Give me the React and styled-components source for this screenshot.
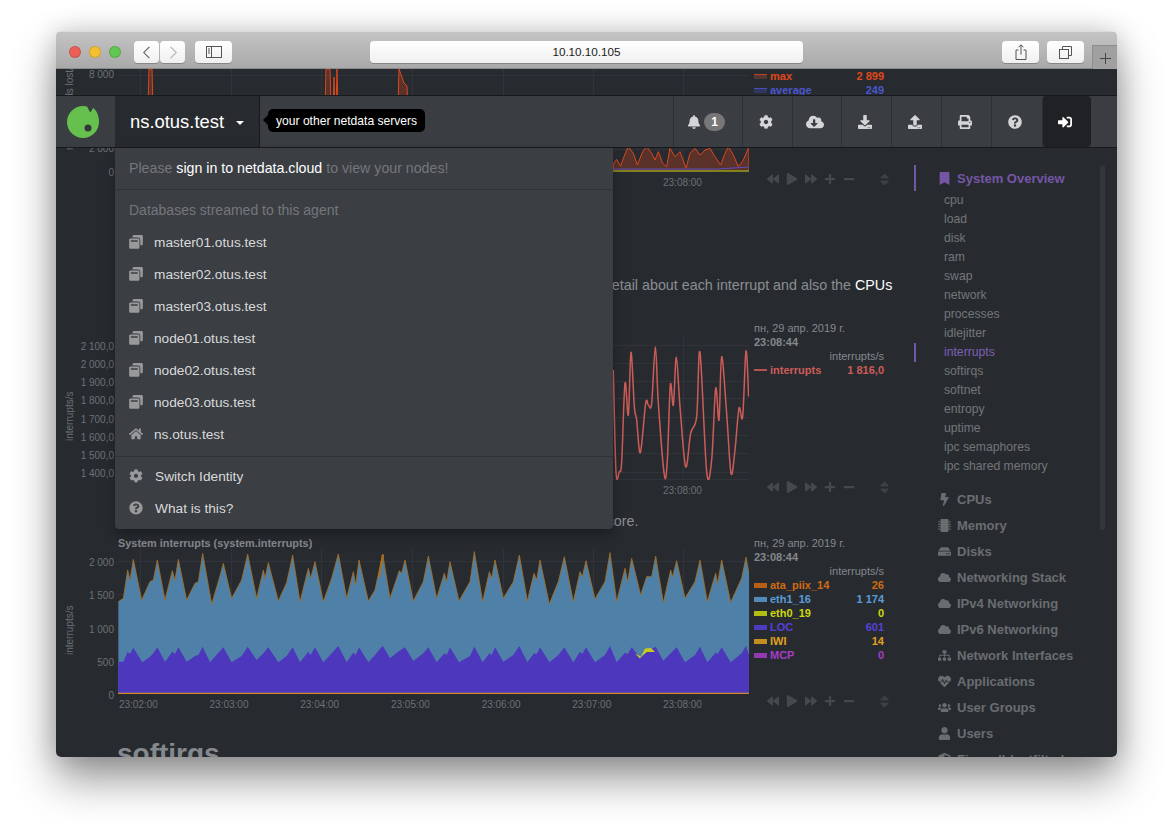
import React from 'react';
import styled, { createGlobalStyle } from 'styled-components';
import {
  FaBell, FaCog, FaCloudDownloadAlt, FaDownload, FaUpload, FaPrint, FaQuestionCircle, FaSignInAlt,
  FaWindowRestore, FaHome, FaBookmark, FaBolt, FaMicrochip, FaHdd, FaCloud, FaSitemap, FaHeartbeat, FaUsers,
  FaUser, FaShieldAlt, FaBackward, FaPlay, FaForward, FaPlus, FaMinus, FaSort,
} from 'react-icons/fa';

const GlobalStyle = createGlobalStyle`
  html, body { margin: 0; padding: 0; background: #fff; }
  body { font-family: 'Liberation Sans', Arial, sans-serif; }
  * { box-sizing: border-box; }
`;

const Desktop = styled.div`
  width: 1173px;
  height: 837px;
  padding: 31px 56px;
  overflow: hidden;
`;

const Window = styled.div`
  width: 1061px;
  height: 726px;
  display: flex;
  flex-direction: column;
  border-radius: 5px;
  overflow: hidden;
  box-shadow: 0 22px 44px rgba(0, 0, 0, 0.42), 0 0 26px rgba(0, 0, 0, 0.16);
`;

/* browser chrome */
const TitleBar = styled.div`
  height: 38px;
  flex: none;
  display: flex;
  align-items: flex-start;
  padding-top: 9px;
  background: linear-gradient(#c4c4c4, #a9a9a9);
  border-top: 1px solid #dcdcdc;
  border-bottom: 1px solid #8a8a8a;
`;

const Light = styled.span`
  width: 12px;
  height: 12px;
  margin: 5px 8px 0 0;
  border-radius: 50%;
  background: ${(p) => p.$color};
  border: 1px solid rgba(0, 0, 0, 0.14);
  &:first-child { margin-left: 13px; }
`;

const ChromeButton = styled.div`
  width: ${(p) => p.$w}px;
  height: 22px;
  margin-left: ${(p) => p.$ml}px;
  display: flex;
  align-items: center;
  justify-content: center;
  background: linear-gradient(#fff, #f0f0f0);
  border-radius: 4px;
  box-shadow: 0 1px 0 rgba(0, 0, 0, 0.22);
  color: ${(p) => p.$color || '#555'};
`;

const UrlField = styled(ChromeButton)`
  font-size: 11.7px;
  padding-bottom: 2px;
  color: #222;
`;

const NewTab = styled.div`
  width: 25px;
  height: 25px;
  margin: 4px 0 0 8px;
  display: flex;
  align-items: center;
  justify-content: center;
  background: #a0a0a0;
  border: 1px solid #8d8d8d;
  border-width: 1px 0 0 1px;
  color: #444;
`;

/* page under the navbar */
const Viewport = styled.div`
  position: relative;
  flex: 1;
  min-height: 0;
  overflow: hidden;
  background: #272b30;
`;

const Dashboard = styled.div`
  display: flex;
  align-items: flex-start;
`;

const Charts = styled.div`
  width: 858px;
  flex: none;
`;

const ChartRow = styled.div`
  display: grid;
  grid-template-columns: 62px 631px 165px;
  height: ${(p) => p.$h}px;
`;

const YAxis = styled.div`
  display: flex;
  justify-content: space-between;
  align-items: flex-start;
  padding-left: 8px;
`;

const YLabel = styled.div`
  writing-mode: vertical-rl;
  transform: rotate(180deg);
  font-size: 10px;
  line-height: 12px;
  color: #6d7074;
  white-space: nowrap;
  height: ${(p) => p.$h}px;
  text-align: center;
  width: 12px;
`;

const Ticks = styled.div`
  height: ${(p) => p.$h}px;
  padding: ${(p) => p.$top}px 4px 0 0;
  display: flex;
  flex-direction: column;
  justify-content: space-between;
  align-items: flex-end;
  font-size: 10px;
  line-height: 12px;
  color: #6d7074;
  white-space: nowrap;
`;

const PlotArea = styled.div`
  position: relative;
  svg { display: block; }
`;

const ChartTitle = styled.div`
  position: absolute;
  left: 0;
  top: -12px;
  font-size: 10.9px;
  font-weight: 700;
  line-height: 13px;
  color: #85888c;
`;

const XAxis = styled.div`
  display: flex;
  margin-left: -25px;
  height: 20px;
  align-items: center;
  overflow: hidden;
`;

const XLabel = styled.span`
  width: 90.7px;
  flex: none;
  text-align: center;
  font-size: 10px;
  color: #6d7074;
`;

const Legend = styled.div`
  height: calc(100% + ${(p) => p.$up}px);
  margin-top: -${(p) => p.$up}px;
  padding: 0 27px 5px 5px;
  display: flex;
  flex-direction: column;
  font-size: 11px;
  line-height: 14px;
  color: #85888c;
`;

const LegendTime = styled.div`
  font-weight: 700;
`;

const LegendUnit = styled.div`
  text-align: right;
  padding-right: 3px;
`;

const LegendRow = styled.div`
  display: flex;
  align-items: center;
  padding-right: 3px;
  font-weight: 700;
  color: ${(p) => p.$color};
`;

const Swatch = styled.i`
  width: 13px;
  height: ${(p) => p.$h}px;
  margin-right: 3px;
  background: ${(p) => p.$color};
  border-top: ${(p) => (p.$edge ? `1px solid ${p.$edge}` : '0')};
  opacity: 0.85;
`;

const LegendValue = styled.span`
  margin-left: auto;
`;

const Controls = styled.div`
  margin-top: auto;
  height: 16px;
  padding-left: 13px;
  display: flex;
  align-items: center;
  gap: 7px;
  color: #45484d;
  font-size: 12px;
`;

const SortIcon = styled(FaSort)`
  margin: 0 -5px 0 auto;
  font-size: 15px;
  color: #3d4045;
`;

const Paragraph = styled.p`
  margin: ${(p) => p.$mt}px 0 0;
  padding-left: 62px;
  width: 850px;
  font-size: 14.3px;
  line-height: 20px;
  height: ${(p) => p.$h}px;
  color: #8b8e92;
`;

const Code = styled.code`
  font-family: 'Liberation Mono', monospace;
  font-size: 12px;
  padding: 2px 4.5px;
`;

const Link = styled.span`
  color: #fff;
`;

const SectionHeading = styled.h2`
  margin: 23px 0 0 61px;
  font-size: 28px;
  line-height: 34px;
  font-weight: 700;
  color: #85888c;
`;

/* right hand table of contents */
const Sidebar = styled.nav`
  flex: 1;
  padding-top: 96px;
  font-size: 13px;
`;

const SideHeader = styled.div`
  height: 26px;
  display: flex;
  align-items: center;
  padding-left: 22px;
  border-left: 2px solid ${(p) => (p.$active ? '#7556a5' : 'transparent')};
  font-weight: 700;
  white-space: nowrap;
  color: ${(p) => (p.$active ? '#7556a5' : '#6a6d70')};
  svg { width: 13px; margin-right: 6px; font-size: 13px; flex: none; }
`;

const SideList = styled.div`
  margin-bottom: 10px;
`;

const SideItem = styled.div`
  height: 19px;
  line-height: 18px;
  padding-left: 28px;
  font-size: 12.2px;
  border-left: 2px solid ${(p) => (p.$active ? '#7556a5' : 'transparent')};
  color: ${(p) => (p.$active ? '#7f5fb4' : '#737679')};
`;

const Scrollbar = styled.div`
  position: absolute;
  left: 1044px;
  top: 96px;
  width: 5px;
  height: 365px;
  border-radius: 3px;
  background: #33363b;
`;

/* sticky navbar, lies over the page */
const NavBar = styled.div`
  position: absolute;
  top: 26px;
  left: 0;
  right: 0;
  height: 53px;
  display: flex;
  background: #3a3d42;
  border-top: 1px solid #17191c;
  border-bottom: 1px solid #17191c;
`;

const LogoCell = styled.div`
  width: 59px;
  flex: none;
  display: flex;
  align-items: center;
  padding-left: 11px;
`;

const HostCell = styled.div`
  width: 145px;
  flex: none;
  display: flex;
  align-items: center;
  padding-left: 15px;
  background: #272b30;
  border-right: 1px solid #17191c;
  color: #fff;
  font-size: 18.4px;
`;

const Caret = styled.i`
  width: 0;
  height: 0;
  margin: 2px 0 0 12px;
  border: 4px solid transparent;
  border-top-color: #fff;
  border-bottom: 0;
`;

const Tooltip = styled.div`
  position: absolute;
  left: 212px;
  top: 13px;
  height: 23px;
  padding: 0 8px;
  display: flex;
  align-items: center;
  border-radius: 5px;
  background: #000;
  color: #fff;
  font-size: 12.1px;
  white-space: nowrap;
  &::before {
    content: '';
    position: absolute;
    left: -5px;
    top: 6px;
    border: 5px solid transparent;
    border-right-color: #000;
    border-left: 0;
  }
`;

const NavActions = styled.div`
  margin-left: auto;
  margin-right: 26px;
  display: flex;
`;

const NavItem = styled.div`
  width: ${(p) => p.$w}px;
  display: flex;
  align-items: center;
  justify-content: center;
  gap: 3px;
  padding-right: 4px;
  border-left: 1px solid #2c2f33;
  color: ${(p) => (p.$dark ? '#fff' : '#d4d5d6')};
  background: ${(p) => (p.$dark ? '#1f2125' : 'transparent')};
  border-radius: ${(p) => (p.$dark ? '4px' : '0')};
  font-size: 14px;
`;

const Badge = styled.span`
  width: 21px;
  height: 18px;
  border-radius: 9px;
  background: #777;
  color: #fff;
  font-size: 12px;
  font-weight: 700;
  text-align: center;
  line-height: 18px;
`;

const Dropdown = styled.div`
  position: absolute;
  left: 59px;
  top: 79px;
  width: 498px;
  height: 381px;
  padding-top: 9px;
  background: #3b3e43;
  border-radius: 0 0 4px 4px;
  box-shadow: 0 6px 12px rgba(0, 0, 0, 0.3);
  font-size: 13.7px;
  color: #d9dadb;
`;

const MenuNote = styled.div`
  height: 32px;
  line-height: 22px;
  padding-left: 14px;
  font-size: 14.2px;
  color: #74777b;
`;

const MenuSignIn = styled.span`
  color: #fff;
`;

const MenuDivider = styled.div`
  height: 1px;
  margin: ${(p) => p.$mt}px 0 ${(p) => p.$mb}px;
  background: #303337;
`;

const MenuHeader = styled.div`
  height: 27px;
  line-height: 22px;
  padding-left: 14px;
  font-size: 14px;
  color: #74777b;
`;

const MenuItem = styled.div`
  height: 32px;
  display: flex;
  align-items: center;
  padding-left: 14px;
`;

const MenuIconBox = styled.span`
  width: ${(p) => p.$w}px;
  flex: none;
  display: flex;
  color: #98999b;
  svg { width: 14px; }
`;

/* chart data, measured off the picture */
const path = (pts) => 'M' + pts.map(([x, y]) => `${x} ${y}`).join('L');

const smooth = (pts) => {
  let d = `M${pts[0][0]} ${pts[0][1]}`;
  for (let i = 0; i < pts.length - 1; i++) {
    const p0 = pts[i - 1] || pts[i];
    const p1 = pts[i];
    const p2 = pts[i + 1];
    const p3 = pts[i + 2] || p2;
    const c1 = [p1[0] + (p2[0] - p0[0]) / 6, p1[1] + (p2[1] - p0[1]) / 6];
    const c2 = [p2[0] - (p3[0] - p1[0]) / 6, p2[1] - (p3[1] - p1[1]) / 6];
    d += `C${c1[0]} ${c1[1]} ${c2[0]} ${c2[1]} ${p2[0]} ${p2[1]}`;
  }
  return d;
};

const left = (z) => z.map(([x, y]) => [x / 3 - 58, y / 3 - 19]);
const right = (z) => z.map(([x, y]) => [x / 3 + 332, y / 3 - 19]);

const topSeries = [
  ...left([[175,215],[190,205],[203,120],[210,150],[220,88],[245,210],[270,155],[280,150],[292,90],[315,210],[337,122],[345,150],[355,88],[380,210],[405,160],[415,155],[428,70],[455,222],[478,145],[490,100],[515,205],[545,150],[563,72],[590,205],[610,120],[615,145],[625,98],[655,213],[680,158],[698,75],[720,215],[745,115],[752,145],[765,95],[790,215],[815,145],[835,72],[860,205],[880,125],[887,165],[897,90],[925,213],[945,180],[968,72],[990,205],[1018,122],[1025,130],[1035,90],[1060,213],[1090,155],[1105,78],[1130,205],[1153,130],[1160,155]]),
  ...right([[0,95],[27,213],[60,155],[73,65],[98,215],[118,125],[125,145],[135,90],[160,205],[190,155],[208,75],[232,213],[252,130],[260,150],[270,90],[298,222],[325,155],[343,80],[370,215],[390,125],[397,140],[408,92],[435,207],[465,155],[480,68],[500,215],[525,115],[533,155],[545,85],[572,195],[590,140],[605,140],[617,78],[640,218],[662,120],[668,140],[680,92],[705,205],[735,155],[750,90],[772,215],[797,130],[803,160],[815,90],[842,217],[875,145],[888,82],[897,130]]),
];

const locSeries = [
  ...left([[175,395],[190,395],[203,365],[210,372],[220,353],[247,397],[270,380],[280,370],[292,352],[315,395],[337,365],[345,372],[355,352],[380,395],[405,378],[415,375],[428,350],[450,397],[478,365],[490,352],[515,397],[545,378],[563,350],[590,390],[610,370],[625,352],[655,397],[680,378],[698,352],[720,397],[745,365],[752,375],[765,352],[790,397],[815,370],[835,348],[860,397],[880,368],[887,375],[897,352],[925,397],[945,375],[968,347],[990,385],[1018,362],[1035,352],[1060,393],[1090,370],[1105,352],[1130,397],[1153,370],[1160,375]]),
  ...right([[0,352],[27,397],[60,378],[73,350],[98,397],[118,370],[125,375],[135,352],[160,395],[190,375],[208,348],[232,397],[252,370],[260,372],[270,352],[298,397],[325,375],[343,352],[370,397],[390,365],[397,372],[408,352],[435,397],[465,375],[480,348],[500,397],[525,368],[533,372],[545,352],[572,385],[590,365],[617,350],[640,392],[662,370],[680,352],[705,397],[735,375],[750,350],[772,397],[797,368],[803,372],[815,352],[842,397],[875,370],[888,347],[897,375]]),
];

const closeTo = (pts, y) => `${path(pts)}L${pts[pts.length - 1][0]} ${y}L${pts[0][0]} ${y}Z`;

const lineSeries = [[40,660],[48,965],[58,965],[65,935],[75,700],[85,795],[93,607],[103,770],[110,810],[121,908],[137,760],[145,765],[155,760],[166,590],[175,760],[193,975],[202,930],[211,705],[220,765],[229,622],[240,770],[257,950],[272,850],[290,800],[300,607],[320,965],[335,930],[347,715],[357,810],[365,620],[380,790],[393,970],[405,900],[417,775],[428,800],[438,603],[446,740]]
  .map(([x, y]) => [482 + x / 3, y / 3 - 185]);

const maxSeries = [[40,42],[50,28],[62,48],[72,20],[85,-10],[100,10],[112,45],[128,5],[140,-10],[155,10],[165,30],[175,5],[188,40],[200,50],[210,-5],[225,20],[240,5],[258,55],[270,10],[285,-5],[300,15],[315,0],[330,-5],[345,20],[362,45],[375,10],[385,-10],[400,15],[415,50],[430,30],[447,-10]]
  .map(([x, y]) => [482 + x / 3, 81 + y / 3]);

const Lines = ({ ys, xs, h }) => (
  <g stroke="#30343a" strokeWidth="1">
    {ys.map((y) => <line key={y} x1="0" x2="631" y1={y + 0.5} y2={y + 0.5} />)}
    {xs.map((x) => <line key={x} x1={x + 0.5} x2={x + 0.5} y1="0" y2={h} />)}
  </g>
);

const minuteLines = [22, 113, 203, 294, 385, 475, 565];

const JitterPlot = () => (
  <svg width="631" height="103">
    <Lines ys={[6, 31, 55, 80]} xs={minuteLines} h={103} />
    <g fill="rgba(224,69,27,0.28)" stroke="#d9481f" strokeWidth="1">
      <path d="M30 40L31 0L34 0L35 40Z" />
      <path d="M207 40L208 0L212 0L213 40L215 40L216 8L217 40L218 40L219 0L220 40Z" />
      <path d="M280 40L281 0L286 14L289 17L290 40Z" />
      <path d={closeTo(maxSeries, 102)} />
    </g>
    <path d="M495 100L600 100L631 98" stroke="#5a4ec0" strokeWidth="1" fill="none" />
    <path d="M495 102L631 102" stroke="#7f9a1e" strokeWidth="1.5" fill="none" />
  </svg>
);

const LinePlot = () => (
  <svg width="631" height="145">
    <Lines ys={[10, 28, 46, 63, 82, 100, 118, 137, 144]} xs={minuteLines} h={145} />
    <path d={smooth(lineSeries)} fill="none" stroke="#cd5c57" strokeWidth="1.5" />
  </svg>
);

const AreaPlot = () => (
  <svg width="631" height="145">
    <Lines ys={[12, 45, 79, 112]} xs={minuteLines} h={145} />
    <path d={closeTo(topSeries, 145)} fill="#4e80a8" />
    <path d={path(topSeries)} fill="none" stroke="#a9701f" strokeWidth="0.8" />
    <path d={closeTo(locSeries, 145)} fill="#4d38bd" />
    <path d="M517 104.500L522 109.500L527 99.500L533 99L537 103L529 103L523 107.500L518 105Z" fill="#c5cc1c" />
    <path d="M260 28L264 5L266 6L262 28Z" fill="#a9701f" />
    <path d="M0 144.400L631 144.400" stroke="#d08a2a" strokeWidth="1.300" />
  </svg>
);

const Logo = () => (
  <svg width="32" height="32" viewBox="0 0 32 32">
    <path
      fill="#66c04d"
      d="M20 .5C21.500 3 22.500 5 23 6.500C24.500 5 25.500 3.500 26 1.800C30 5 32 10 32 16A16 16 0 1 1 16 0C17.500 0 19 .2 20 .5Z"
    />
    <circle cx="21" cy="22" r="3.500" fill="#34383c" />
  </svg>
);

const Chevron = ({ flip }) => (
  <svg width="8" height="13" viewBox="0 0 10 16" fill="none" stroke="currentColor" strokeWidth="1.300">
    <path d={flip ? 'M2 1l7 7-7 7' : 'M8 1L1 8l7 7'} />
  </svg>
);

const SidebarGlyph = () => (
  <svg width="16" height="12" viewBox="0 0 16 12" fill="none" stroke="#555" strokeWidth="1">
    <rect x=".5" y=".5" width="15" height="11" />
    <path d="M5.500 .5v11M2 3h2M2 5h2M2 7h2" />
  </svg>
);

const ShareGlyph = () => (
  <svg width="12" height="16" viewBox="0 0 12 16" fill="none" stroke="#555" strokeWidth="1">
    <path d="M3.500 6H1v9.500h10V6H8.500M6 10.500V1M3.500 3.300L6 .8l2.500 2.500" />
  </svg>
);

const TabsGlyph = () => (
  <svg width="13" height="13" viewBox="0 0 13 13" fill="none" stroke="#555" strokeWidth="1">
    <rect x=".5" y="3.500" width="9" height="9" />
    <path d="M3.500 3.500V.5h9v9h-3" />
  </svg>
);

const PlusGlyph = () => (
  <svg width="11" height="11" viewBox="0 0 11 11" stroke="#444" strokeWidth="1">
    <path d="M5.500 0v11M0 5.500h11" />
  </svg>
);

const minutes = ['23:02:00', '23:03:00', '23:04:00', '23:05:00', '23:06:00', '23:07:00', '23:08:00'];

const TimeAxis = () => (
  <XAxis>
    {minutes.map((m) => <XLabel key={m}>{m}</XLabel>)}
  </XAxis>
);

const ChartControls = () => (
  <Controls>
    <FaBackward />
    <FaPlay />
    <FaForward />
    <FaPlus />
    <FaMinus />
    <SortIcon />
  </Controls>
);

const Stamp = () => (
  <>
    <div>пн, 29 апр. 2019 г.</div>
    <LegendTime>23:08:44</LegendTime>
    <LegendUnit>interrupts/s</LegendUnit>
  </>
);

const dimensions = [
  { name: 'ata_piix_14', value: '26', color: '#d06a12' },
  { name: 'eth1_16', value: '1 174', color: '#5b9bd5' },
  { name: 'eth0_19', value: '0', color: '#cdd80f' },
  { name: 'LOC', value: '601', color: '#5540d8' },
  { name: 'IWI', value: '14', color: '#e0a01f' },
  { name: 'MCP', value: '0', color: '#a53cc8' },
];

const overview = ['cpu', 'load', 'disk', 'ram', 'swap', 'network', 'processes', 'idlejitter', 'interrupts', 'softirqs', 'softnet', 'entropy', 'uptime', 'ipc semaphores', 'ipc shared memory'];

const sections = [
  { title: 'CPUs', icon: <FaBolt /> },
  { title: 'Memory', icon: <FaMicrochip /> },
  { title: 'Disks', icon: <FaHdd /> },
  { title: 'Networking Stack', icon: <FaCloud /> },
  { title: 'IPv4 Networking', icon: <FaCloud /> },
  { title: 'IPv6 Networking', icon: <FaCloud /> },
  { title: 'Network Interfaces', icon: <FaSitemap /> },
  { title: 'Applications', icon: <FaHeartbeat /> },
  { title: 'User Groups', icon: <FaUsers /> },
  { title: 'Users', icon: <FaUser /> },
  { title: 'Firewall (netfilter)', icon: <FaShieldAlt /> },
];

const streamed = ['master01.otus.test', 'master02.otus.test', 'master03.otus.test', 'node01.otus.test', 'node02.otus.test', 'node03.otus.test'];

const App = () => (
  <Desktop>
    <GlobalStyle />
    <Window>
      <TitleBar>
        <Light $color="#ec5f57" />
        <Light $color="#f5c02f" />
        <Light $color="#62c654" />
        <ChromeButton $w={25} $ml={5}><Chevron /></ChromeButton>
        <ChromeButton $w={25} $ml={1} $color="#aaa"><Chevron flip /></ChromeButton>
        <ChromeButton $w={37} $ml={10}><SidebarGlyph /></ChromeButton>
        <UrlField $w={433} $ml={138}>10.10.10.105</UrlField>
        <ChromeButton $w={37} $ml={199}><ShareGlyph /></ChromeButton>
        <ChromeButton $w={37} $ml={8}><TabsGlyph /></ChromeButton>
        <NewTab><PlusGlyph /></NewTab>
      </TitleBar>
      <Viewport>
        <Dashboard>
          <Charts>
            <ChartRow $h={123}>
              <YAxis>
                <YLabel $h={81}>microseconds lost/s</YLabel>
                <Ticks $h={110} $top={0}>
                  <span>8 000</span><span>6 000</span><span>4 000</span><span>2 000</span><span>0</span>
                </Ticks>
              </YAxis>
              <PlotArea>
                <JitterPlot />
                <TimeAxis />
              </PlotArea>
              <Legend $up={0}>
                <LegendRow $color="#e0471c"><Swatch $h={5} $color="#5a3a33" $edge="#e0471c" />max<LegendValue>2 899</LegendValue></LegendRow>
                <LegendRow $color="#4a57cf"><Swatch $h={5} $color="#33386a" $edge="#4a57cf" />average<LegendValue>249</LegendValue></LegendRow>
                <ChartControls />
              </Legend>
            </ChartRow>

            <Paragraph $mt={83} $h={60}>
              Total number of CPU interrupts. Check <Code>system.interrupts</Code> that gives more detail about each interrupt and also the <Link>CPUs</Link> section where interrupts are analyzed per CPU core.
            </Paragraph>

            <ChartRow $h={165}>
              <YAxis>
                <YLabel $h={162}>interrupts/s</YLabel>
                <Ticks $h={145} $top={6}>
                  <span>2 100,0</span><span>2 000,0</span><span>1 900,0</span><span>1 800,0</span>
                  <span>1 700,0</span><span>1 600,0</span><span>1 500,0</span><span>1 400,0</span>
                </Ticks>
              </YAxis>
              <PlotArea>
                <LinePlot />
                <TimeAxis />
              </PlotArea>
              <Legend $up={14}>
                <Stamp />
                <LegendRow $color="#cd5c57"><Swatch $h={2} $color="#cd5c57" />interrupts<LegendValue>1 816,0</LegendValue></LegendRow>
                <ChartControls />
              </Legend>
            </ChartRow>

            <Paragraph $mt={11} $h={38}>
              CPU interrupts in detail. At the CPUs section, interrupts are charted per CPU core.
            </Paragraph>

            <ChartRow $h={165}>
              <YAxis>
                <YLabel $h={162}>interrupts/s</YLabel>
                <Ticks $h={153} $top={8}>
                  <span>2 000</span><span>1 500</span><span>1 000</span><span>500</span><span>0</span>
                </Ticks>
              </YAxis>
              <PlotArea>
                <ChartTitle>System interrupts (system.interrupts)</ChartTitle>
                <AreaPlot />
                <TimeAxis />
              </PlotArea>
              <Legend $up={13}>
                <Stamp />
                {dimensions.map((d) => (
                  <LegendRow key={d.name} $color={d.color}>
                    <Swatch $h={5} $color={d.color} />{d.name}<LegendValue>{d.value}</LegendValue>
                  </LegendRow>
                ))}
                <ChartControls />
              </Legend>
            </ChartRow>

            <SectionHeading>softirqs</SectionHeading>
          </Charts>

          <Sidebar>
            <SideHeader $active><FaBookmark />System Overview</SideHeader>
            <SideList>
              {overview.map((item) => (
                <SideItem key={item} $active={item === 'interrupts'}>{item}</SideItem>
              ))}
            </SideList>
            {sections.map((s) => (
              <SideHeader key={s.title}>{s.icon}{s.title}</SideHeader>
            ))}
          </Sidebar>
        </Dashboard>
        <Scrollbar />

        <NavBar>
          <LogoCell><Logo /></LogoCell>
          <HostCell>ns.otus.test<Caret /></HostCell>
          <Tooltip>your other netdata servers</Tooltip>
          <NavActions>
            <NavItem $w={69}><FaBell /><Badge>1</Badge></NavItem>
            <NavItem $w={50}><FaCog /></NavItem>
            <NavItem $w={49}><FaCloudDownloadAlt size={18} /></NavItem>
            <NavItem $w={50}><FaDownload /></NavItem>
            <NavItem $w={50}><FaUpload /></NavItem>
            <NavItem $w={50}><FaPrint /></NavItem>
            <NavItem $w={51}><FaQuestionCircle /></NavItem>
            <NavItem $w={49} $dark><FaSignInAlt /></NavItem>
          </NavActions>
        </NavBar>

        <Dropdown>
          <MenuNote>Please <MenuSignIn>sign in to netdata.cloud</MenuSignIn> to view your nodes!</MenuNote>
          <MenuDivider $mt={0} $mb={9} />
          <MenuHeader>Databases streamed to this agent</MenuHeader>
          {streamed.map((host) => (
            <MenuItem key={host}>
              <MenuIconBox $w={25}><FaWindowRestore /></MenuIconBox>{host}
            </MenuItem>
          ))}
          <MenuItem><MenuIconBox $w={25}><FaHome /></MenuIconBox>ns.otus.test</MenuItem>
          <MenuDivider $mt={6} $mb={3} />
          <MenuItem><MenuIconBox $w={26}><FaCog /></MenuIconBox>Switch Identity</MenuItem>
          <MenuItem><MenuIconBox $w={26}><FaQuestionCircle /></MenuIconBox>What is this?</MenuItem>
        </Dropdown>
      </Viewport>
    </Window>
  </Desktop>
);

export default App;
